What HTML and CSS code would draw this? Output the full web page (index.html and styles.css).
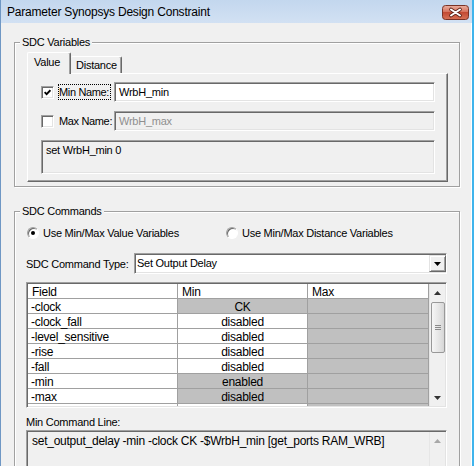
FILE: index.html
```html
<!DOCTYPE html>
<html lang="en">
<head>
  <meta charset="UTF-8">
  <title>Parameter Synopsys Design Constraint</title>
  <link rel="stylesheet" href="styles.css">
</head>
<body>

<div class="window">
  <div class="titlebar">
    <span class="title">Parameter Synopsys Design Constraint</span>
    <span class="close">
      <svg width="27" height="15" viewBox="0 0 27 15">
        <defs>
          <linearGradient id="closeGrad" x1="0" y1="0" x2="0" y2="1">
            <stop offset="0" stop-color="#eab0a2"/>
            <stop offset=".45" stop-color="#d7735d"/>
            <stop offset=".5" stop-color="#c34a33"/>
            <stop offset="1" stop-color="#d87256"/>
          </linearGradient>
        </defs>
        <rect x=".5" y=".5" width="26" height="14" rx="3" fill="url(#closeGrad)" stroke="#7a3326"/>
        <path d="M9 4.5 L18 10.5 M18 4.5 L9 10.5" stroke="#5a2016" stroke-width="3.6" stroke-linecap="round"/>
        <path d="M9 4.5 L18 10.5 M18 4.5 L9 10.5" stroke="#fff" stroke-width="2" stroke-linecap="round"/>
      </svg>
    </span>
  </div>

  <div class="client">
    <!-- ——— variables ——— -->
    <fieldset class="group vars">
      <legend>SDC Variables</legend>
      <div class="tabs">
        <span class="tab active">Value</span>
        <span class="tab">Distance</span>
      </div>
      <div class="panel">
        <div class="row">
          <span class="check on">
            <svg width="7" height="7" viewBox="0 0 7 7"><path d="M0.6 3.2 L2.6 5.2 L6.4 1.2" fill="none" stroke="#000" stroke-width="1.8"/></svg>
          </span>
          <span class="lbl focus">Min Name:</span>
          <span class="edit">WrbH_min</span>
        </div>
        <div class="row">
          <span class="check"></span>
          <span class="lbl">Max Name:</span>
          <span class="edit disabled">WrbH_max</span>
        </div>
        <div class="edit out">set WrbH_min 0</div>
      </div>
    </fieldset>

    <!-- ——— commands ——— -->
    <fieldset class="group cmds">
      <legend>SDC Commands</legend>
      <div class="radios">
        <span class="opt first"><span class="radio on"></span>Use Min/Max Value Variables</span>
        <span class="opt"><span class="radio"></span>Use Min/Max Distance Variables</span>
      </div>

      <div class="combo-row">
        <span class="combo-lbl">SDC Command Type:</span>
        <div class="combo">
          <span class="combo-text">Set Output Delay</span>
          <span class="drop">
            <svg width="7" height="4" viewBox="0 0 7 4"><path d="M0 0h7L3.5 4z" fill="#000"/></svg>
          </span>
        </div>
      </div>

      <div class="list">
        <div class="grid">
          <table>
            <colgroup><col class="c1"><col class="c2"><col class="c3"></colgroup>
            <tr class="head"><td>Field</td><td>Min</td><td>Max</td></tr>
            <tr><td>-clock</td><td class="val off">CK</td><td class="off"></td></tr>
            <tr><td>-clock_fall</td><td class="val">disabled</td><td class="off"></td></tr>
            <tr><td>-level_sensitive</td><td class="val">disabled</td><td class="off"></td></tr>
            <tr><td>-rise</td><td class="val">disabled</td><td class="off"></td></tr>
            <tr><td>-fall</td><td class="val">disabled</td><td class="off"></td></tr>
            <tr><td>-min</td><td class="val off">enabled</td><td class="off"></td></tr>
            <tr><td>-max</td><td class="val off">disabled</td><td class="off"></td></tr>
            <tr><td></td><td class="val"></td><td class="off"></td></tr>
          </table>
        </div>
        <div class="vscroll">
          <span class="arrow"><svg width="7" height="4" viewBox="0 0 7 4"><path d="M0 4h7L3.5 0z" fill="#333"/></svg></span>
          <span class="thumb"></span>
          <span class="track"></span>
          <span class="arrow"><svg width="7" height="4" viewBox="0 0 7 4"><path d="M0 0h7L3.5 4z" fill="#333"/></svg></span>
        </div>
      </div>

      <div class="cmd-lbl">Min Command Line:</div>
      <div class="cmdline">
        <span class="cmd-text">set_output_delay -min -clock CK -$WrbH_min [get_ports RAM_WRB]</span>
        <div class="vscroll dim">
          <span class="arrow"><svg width="7" height="4" viewBox="0 0 7 4"><path d="M0 4h7L3.5 0z" fill="#a8a8a8"/></svg></span>
          <span class="track"></span>
        </div>
      </div>
    </fieldset>
  </div>
</div>

</body>
</html>
```

FILE: styles.css
```css
* { box-sizing: border-box; }
body {
  margin: 0;
  font-family: "Liberation Sans", Arial, sans-serif;
  font-size: 11px;
  letter-spacing: -0.25px;
  color: #000;
  background: #f0f0f0;
}

/* ——— window frame ——— */
.window {
  width: 474px;
  height: 466px;
  overflow: hidden;
  display: flex;
  flex-direction: column;
  border-left: 1px solid #6f97c4;
  border-right: 2px solid #3fb4ec;
  background: #f0f0f0;
}
.titlebar {
  height: 23px;
  flex: none;
  display: flex;
  align-items: flex-start;
  background: linear-gradient(#c3d7ee, #d2e1f3);
}
.title {
  flex: 1;
  padding: 5px 0 0 6px;
  font-size: 12px;
  letter-spacing: -0.2px;
  line-height: 15px;
}
.close { margin: 5px 3px 0 0; height: 15px; }
.close svg { display: block; }

.client {
  flex: 1;
  padding: 12px 12px 0 13px;
  box-shadow: inset -1px 0 0 #fff;
}

/* ——— group boxes ——— */
.group {
  margin: 0;
  min-width: 0;
  border: 1px solid #a0a0a0;
  box-shadow: 1px 1px 0 #fff, inset 1px 1px 0 #fff;
}
.group legend {
  padding: 0 2px;
  line-height: 14px;
  background: #f0f0f0;
}
.vars { padding: 3px 11px 4px 12px; }
.vars legend { margin-left: -7px; }
.cmds { margin-top: 17px; padding: 8px 12px 0 11px; }
.cmds legend { margin-left: -6px; }

/* ——— tabs ——— */
.tabs { display: flex; align-items: flex-end; height: 21px; }
.tab {
  height: 17px;
  width: 51px;
  padding: 1px 0 0 5px;
  line-height: 14px;
  border-top: 1px solid #fff;
  border-right: 1px solid #696969;
  box-shadow: inset -1px 0 0 #a0a0a0;
  border-radius: 2px 2px 0 0;
}
.tab.active {
  position: relative;
  z-index: 1;
  height: 22px;
  width: 44px;
  margin-bottom: -1px;
  padding: 2px 0 0 6px;
  border-left: 1px solid #fff;
  background: #f0f0f0;
}

.panel {
  border: 1px solid;
  border-color: #fff #696969 #696969 #fff;
  box-shadow: inset -1px -1px 0 #a0a0a0;
  padding: 8px 12px 7px 13px;
}
.row { display: flex; align-items: center; height: 20px; margin-bottom: 9px; }

.check {
  width: 13px;
  height: 13px;
  flex: none;
  border: 1px solid;
  border-color: #a0a0a0 #fff #fff #a0a0a0;
  box-shadow: inset 1px 1px 0 #696969, inset -1px -1px 0 #e3e3e3;
  background: #fff;
  padding: 2px 0 0 2px;
}
.check svg { display: block; }
.lbl {
  width: 53px;
  flex: none;
  margin: 0 3px 0 4px;
  line-height: 14px;
  border: 1px solid transparent;
  padding: 0;
  white-space: nowrap;
  letter-spacing: -0.35px;
}
.lbl.focus { border: 1px dotted #000; }

.edit {
  flex: 1;
  height: 20px;
  border: 1px solid;
  border-color: #a0a0a0 #fff #fff #a0a0a0;
  box-shadow: inset 1px 1px 0 #696969, inset -1px -1px 0 #e3e3e3;
  background: #fff;
  padding: 2px 4px;
  line-height: 14px;
  white-space: nowrap;
}
.edit.disabled { background: #f0f0f0; color: #8f8f8f; }
.edit.out { height: 34px; padding: 2px 4px; background: #f0f0f0; }

/* ——— commands ——— */
.radios { display: flex; height: 14px; line-height: 14px; }
.opt { display: flex; align-items: center; gap: 4px; }
.opt.first { width: 200px; padding-left: 1px; }
.radio {
  width: 12px;
  height: 12px;
  flex: none;
  border-radius: 50%;
  border: 1px solid;
  border-color: #a0a0a0 #fff #fff #a0a0a0;
  box-shadow: inset 1px 1px 0 #696969;
  background: #fff;
  display: flex;
  align-items: center;
  justify-content: center;
}
.radio.on::after {
  content: "";
  width: 4px;
  height: 4px;
  border-radius: 50%;
  background: #000;
}

.combo-row { display: flex; align-items: center; height: 21px; margin-top: 13px; }
.combo-lbl { width: 108px; flex: none; }
.combo {
  flex: 1;
  height: 21px;
  display: flex;
  border: 1px solid;
  border-color: #a0a0a0 #fff #fff #a0a0a0;
  box-shadow: inset 1px 1px 0 #696969, inset -1px -1px 0 #e3e3e3;
  background: #fff;
}
.combo-text { flex: 1; padding: 2px 0 0 2px; line-height: 14px; }
.drop {
  width: 17px;
  height: 17px;
  margin: 1px 0;
  display: flex;
  align-items: center;
  justify-content: center;
  background: #f0f0f0;
  border: 1px solid;
  border-color: #e3e3e3 #696969 #696969 #e3e3e3;
  box-shadow: inset 1px 1px 0 #fff, inset -1px -1px 0 #a0a0a0;
}
.drop svg { display: block; margin-top: 1px; }

/* ——— field list ——— */
.list, .cmdline {
  display: flex;
  border: 1px solid;
  border-color: #a0a0a0 #fff #fff #a0a0a0;
  box-shadow: inset 1px 1px 0 #696969, inset -1px -1px 0 #e3e3e3;
  padding: 1px;
}
.list { margin-top: 8px; height: 126px; background: #fff; }
.grid { width: 401px; flex: none; overflow: hidden; }
table {
  width: 401px;
  table-layout: fixed;
  border-collapse: separate;
  border-spacing: 0;
  font-size: 12px;
  letter-spacing: -0.25px;
}
col.c1 { width: 150px; }
col.c2 { width: 130px; }
col.c3 { width: 121px; }
td {
  height: 15px;
  padding: 2px 3px 0;
  line-height: 12px;
  border-right: 1px solid #a0a0a0;
  border-bottom: 1px solid #a0a0a0;
  white-space: nowrap;
  background: #fff;
}
td.val { text-align: center; }
td.off { background: #c0c0c0; }
.head td { padding-left: 4px; }

.vscroll {
  width: 16px;
  flex: none;
  display: flex;
  flex-direction: column;
  background: #f0f0f0;
  border-left: 1px solid #e6e6e6;
}
.arrow {
  height: 17px;
  flex: none;
  display: flex;
  align-items: center;
  justify-content: center;
}
.arrow svg { display: block; }
.thumb {
  height: 51px;
  flex: none;
  margin: 1px 0 0 1px;
  border: 1px solid #989898;
  border-radius: 2px;
  background: linear-gradient(to right, #f6f6f6, #e4e4e4 60%, #d6d6d6);
  display: flex;
  align-items: center;
  justify-content: center;
}
.thumb::after {
  content: "";
  width: 6px;
  height: 1px;
  margin-top: -4px;
  background: #8a8a8a;
  box-shadow: 0 2px 0 #8a8a8a, 0 4px 0 #8a8a8a;
}
.track { flex: 1; }

.cmd-lbl { margin-top: 7px; line-height: 14px; }
.cmdline { margin-top: 1px; height: 60px; background: #f0f0f0; }
.cmd-text {
  flex: 1;
  padding: 2px 0 0 4px;
  font-size: 12px;
  line-height: 14px;
  white-space: nowrap;
}
.vscroll.dim { border-left-color: #e6e6e6; }
```
